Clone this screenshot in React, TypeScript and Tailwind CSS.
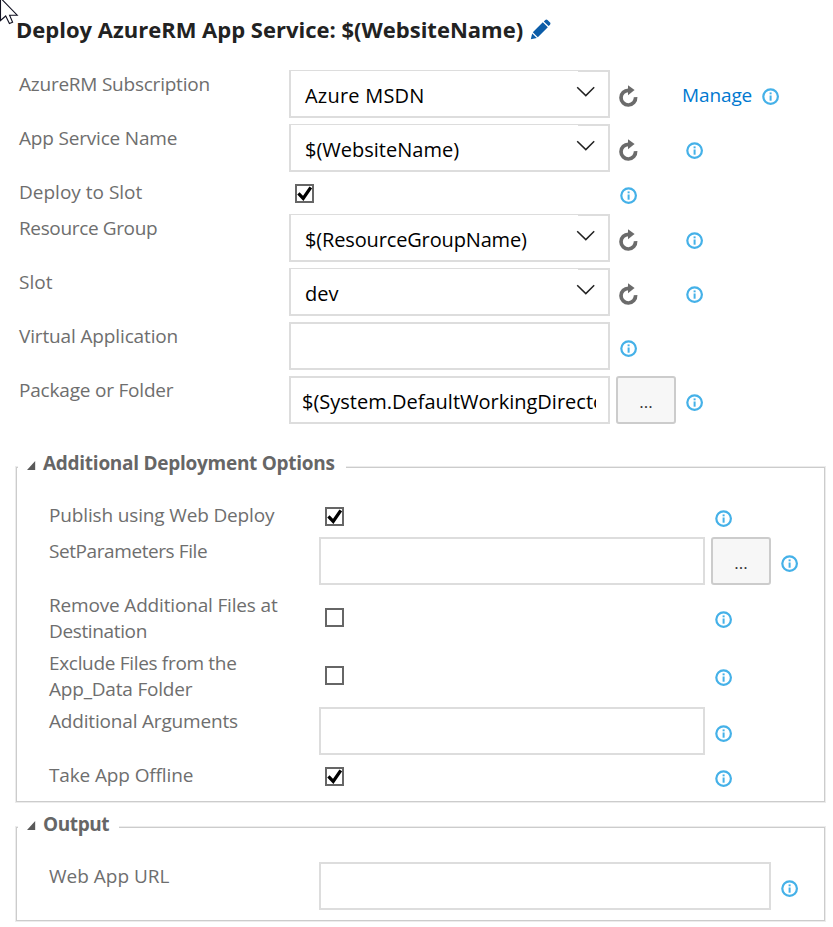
import type { ReactNode } from 'react';

function InfoIcon({ className = '' }: { className?: string }) {
  return (
    <svg className={`h-[17px] w-[17px] shrink-0 ${className}`} viewBox="0 0 17 17">
      <circle cx="8.6" cy="8.6" r="7.3" fill="none" stroke="#45b1e8" strokeWidth="2.2" />
      <rect x="7.6" y="7.5" width="2" height="5.2" fill="#45b1e8" />
      <rect x="7.6" y="4.4" width="2" height="1.9" fill="#45b1e8" />
    </svg>
  );
}

function RefreshIcon() {
  return (
    <svg className="mt-[15px] ml-[9px] h-[22px] w-[19px] shrink-0" viewBox="0 0 19 22">
      <path d="M9.6 5.4A7.3 7.3 0 1 0 16.6 12.2" fill="none" stroke="#6b6b6b" strokeWidth="3.7" />
      <path d="M9 .2L15.6 5L9 10.2Z" fill="#6b6b6b" />
    </svg>
  );
}

function Checkbox({ checked = false, className = '' }: { checked?: boolean; className?: string }) {
  return (
    <span className={`ml-[6px] block h-[19px] w-[19px] shrink-0 border-2 border-[#666] bg-white ${className}`}>
      {checked && (
        <svg className="block h-[15px] w-[15px]" viewBox="0 0 15 15">
          <path d="M1.4 7.4L6.2 12.4L13.8 1.4" fill="none" stroke="#000" strokeWidth="3.3" />
        </svg>
      )}
    </span>
  );
}

function Select({ value, tracking }: { value: string; tracking: string }) {
  return (
    <div className="flex h-12 w-[321px] shrink-0 border-2 border-t border-[#ddd] text-black">
      <span className={`flex-1 pt-[10px] pl-[14px] text-[20px] leading-[30px] whitespace-nowrap ${tracking}`}>{value}</span>
      <span className="w-[30px] border-t border-[#ddd]">
        <svg className="mt-[14px] -ml-[2px] h-[12px] w-[20px]" viewBox="0 0 20 12">
          <path d="M1.2 1.2L9.8 9.6L18.2 1.2" fill="none" stroke="#222" strokeWidth="1.5" />
        </svg>
      </span>
    </div>
  );
}

function TextBox({ width, children }: { width: string; children?: ReactNode }) {
  return <div className={`h-12 shrink-0 border-2 border-[#ddd] px-[11px] text-black ${width}`}>{children}</div>;
}

function BrowseButton() {
  return (
    <button className="ml-[6px] flex h-12 w-[60px] shrink-0 justify-center rounded-[3px] border-2 border-[#ccc] bg-[#f7f7f7] pt-[12px] text-[17px] leading-[24px] text-[#333]">
      ...
    </button>
  );
}

function Row({ label, tracking = '', height, children }: {
  label: ReactNode; tracking?: string; height: string; children: ReactNode;
}) {
  return (
    <div className={`flex items-start ${height}`}>
      <div className={`w-[270px] shrink-0 pt-px text-[19px] leading-[26px] whitespace-nowrap text-[#6e6e6e] ${tracking}`}>{label}</div>
      {children}
    </div>
  );
}

function Legend({ title, width, tracking }: { title: string; width: string; tracking: string }) {
  return (
    <legend className={`ml-px flex h-[27px] bg-white text-[#666] ${width}`}>
      <svg className="mt-[7px] ml-[9px] h-[10px] w-[9px] shrink-0" viewBox="0 0 9 10">
        <path d="M8.2 0V9H0Z" fill="#595959" />
      </svg>
      <span className={`ml-[7px] text-[19px] leading-[26px] font-bold whitespace-nowrap ${tracking}`}>{title}</span>
    </legend>
  );
}

export default function App() {
  return (
    <main className="relative h-[927px] w-[833px] overflow-hidden bg-white font-['Open_Sans','Noto_Sans',sans-serif]">
      <svg className="absolute top-0 left-0 h-[25px] w-[20px]" viewBox="0 0 20 25">
        <path d="M.5 -1V20.5L5.7 16L9.4 23.5L12.6 22.2L9.6 15.2H17.2L1.5 -1" fill="#fff" stroke="#111122" strokeWidth="1.1" />
      </svg>
      <header className="flex h-[70px] pt-[13px] pl-4">
        <h1 className="w-[514px] text-[22px] leading-[32px] font-bold whitespace-nowrap text-[#222]">
          Deploy AzureRM App Service: $(WebsiteName)
        </h1>
        <svg className="mt-[6px] h-[21px] w-[21px]" viewBox="0 0 21 21">
          <path d="M.8 20.2L2.2 14.4L6.8 19Z" fill="#0b5ca8" />
          <path d="M2.8 13.2L12.8 3.2L17.8 8.2L7.8 18.2Z" fill="#0b5ca8" />
          <path d="M13.8 2.4L15.3 .9Q16.4 0 17.5 1L20 3.5Q21 4.6 20 5.7L18.6 7.1Z" fill="#0b5ca8" />
        </svg>
      </header>

      <section className="pl-[19px]">
        <Row label="AzureRM Subscription" tracking="tracking-[-0.23px]" height="h-[54px]">
          <Select value="Azure MSDN" tracking="tracking-[0.22px]" />
          <RefreshIcon />
          <a className="mt-[10px] ml-[44px] w-[80px] text-[19px] leading-[30px] tracking-[-0.12px] text-[#0078d0]">Manage</a>
          <InfoIcon className="mt-[18px]" />
        </Row>
        <Row label="App Service Name" tracking="tracking-[-0.19px]" height="h-[54px]">
          <Select value="$(WebsiteName)" tracking="" />
          <RefreshIcon />
          <InfoIcon className="mt-[18px] ml-[48px]" />
        </Row>
        <Row label="Deploy to Slot" height="h-[36px]">
          <Checkbox checked className="mt-[6px]" />
          <InfoIcon className="mt-[9px] ml-[306px]" />
        </Row>
        <Row label="Resource Group" tracking="tracking-[-0.36px]" height="h-[54px]">
          <Select value="$(ResourceGroupName)" tracking="tracking-[-0.15px]" />
          <RefreshIcon />
          <InfoIcon className="mt-[18px] ml-[48px]" />
        </Row>
        <Row label="Slot" height="h-[54px]">
          <Select value="dev" tracking="" />
          <RefreshIcon />
          <InfoIcon className="mt-[18px] ml-[48px]" />
        </Row>
        <Row label="Virtual Application" tracking="tracking-[-0.14px]" height="h-[54px]">
          <TextBox width="w-[321px]" />
          <InfoIcon className="mt-[18px] ml-[10px]" />
        </Row>
        <Row label="Package or Folder" tracking="tracking-[-0.2px]" height="h-[54px]">
          <TextBox width="w-[321px]">
            <div className="w-[294px] overflow-hidden pt-[9px] text-[20px] leading-[30px] whitespace-nowrap">$(System.DefaultWorkingDirectory)</div>
          </TextBox>
          <BrowseButton />
          <InfoIcon className="mt-[18px] ml-[10px]" />
        </Row>
      </section>

      <fieldset className="mt-[24px] ml-4 h-[348px] w-[809px] border border-[#ccc] shadow-[0_0_0_1px_#ececec]">
        <Legend title="Additional Deployment Options" width="w-[328px]" tracking="-mt-[4px] tracking-[-0.27px]" />
        <div className="pt-[20px] pl-[32px]">
          <Row label="Publish using Web Deploy" tracking="tracking-[-0.15px]" height="h-[36px]">
            <Checkbox checked className="mt-[6px]" />
            <InfoIcon className="mt-[9px] ml-[371px]" />
          </Row>
          <Row label="SetParameters File" tracking="tracking-[-0.42px]" height="h-[54px]">
            <TextBox width="w-[386px]" />
            <BrowseButton />
            <InfoIcon className="mt-[18px] ml-[10px]" />
          </Row>
          <Row label={<>Remove Additional Files at<br /><span className="tracking-[-0.36px]">Destination</span></>} tracking="tracking-[-0.17px]" height="h-[58px]">
            <Checkbox className="mt-[17px]" />
            <InfoIcon className="mt-[20px] ml-[371px]" />
          </Row>
          <Row label={<>Exclude Files from the<br /><span className="tracking-[-0.2px]">App_Data Folder</span></>} tracking="tracking-[-0.32px]" height="h-[58px]">
            <Checkbox className="mt-[17px]" />
            <InfoIcon className="mt-[20px] ml-[371px]" />
          </Row>
          <Row label="Additional Arguments" tracking="tracking-[-0.18px]" height="h-[54px]">
            <TextBox width="w-[386px]" />
            <InfoIcon className="mt-[18px] ml-[10px]" />
          </Row>
          <Row label="Take App Offline" tracking="tracking-[-0.13px]" height="h-[40px]">
            <Checkbox checked className="mt-[6px]" />
            <InfoIcon className="mt-[9px] ml-[371px]" />
          </Row>
        </div>
      </fieldset>

      <fieldset className="mt-[12px] ml-4 h-[107px] w-[809px] border border-[#ccc] shadow-[0_0_0_1px_#ececec]">
        <Legend title="Output" width="w-[101px]" tracking="-mt-[3px] tracking-[-0.4px]" />
        <div className="pt-[21px] pl-[32px]">
          <Row label="Web App URL" height="h-[54px]">
            <TextBox width="w-[452px]" />
            <InfoIcon className="mt-[18px] ml-[10px]" />
          </Row>
        </div>
      </fieldset>
    </main>
  );
}
